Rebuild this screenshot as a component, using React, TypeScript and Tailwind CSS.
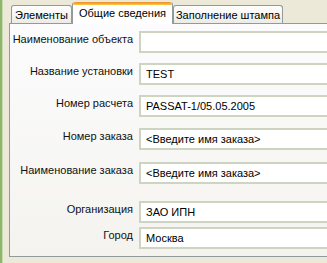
const rows = [
  { label: "Наименование объекта", value: "", mt: "mt-[6px]" },
  { label: "Название установки", value: "TEST", mt: "mt-[10px]" },
  { label: "Номер расчета", value: "PASSAT-1/05.05.2005", mt: "mt-[10px]" },
  { label: "Номер заказа", value: "<Введите имя заказа>", mt: "mt-[11px]" },
  { label: "Наименование заказа", value: "<Введите имя заказа>", mt: "mt-[12px]" },
  { label: "Организация", value: "ЗАО ИПН", mt: "mt-[17px]" },
  { label: "Город", value: "Москва", mt: "mt-[4px]" },
];

const font = "font-['Liberation_Sans',Arial,sans-serif]";

function Tab({ label, active }: { label: string; active?: boolean }) {
  if (active) {
    return (
      <div className="relative z-10 -mb-px flex h-[22px] w-[101px] flex-col rounded-t-[3px] border-x border-[#919b9c] bg-white">
        <div className="h-[3px] rounded-t-[3px] bg-gradient-to-b from-[#e68b2c] to-[#ffc83c]" />
        <div className="flex flex-1 items-start justify-center whitespace-nowrap pt-[1px] text-[11px] leading-[14px] text-black">
          {label}
        </div>
      </div>
    );
  }
  return (
    <div className="flex h-[18px] items-start justify-center whitespace-nowrap rounded-t-[3px] border-x border-t border-[#919b9c] bg-gradient-to-b from-white to-[#ecebe5] pt-[2px] text-[11px] leading-[14px] text-black">
      {label}
    </div>
  );
}

export default function App() {
  return (
    <div className={`flex h-[263px] w-[327px] overflow-hidden bg-[#ece9d8] ${font}`}>
      <div className="flex w-[3px] shrink-0">
        <div className="w-[2px] bg-[#8fb46c]" />
        <div className="w-px bg-[#c6dab0]" />
      </div>
      <div className="flex flex-col pl-[6px] pt-[2px]">
        <div className="flex items-end pl-[2px]">
          <div className="w-[61px]">
            <Tab label="Элементы" />
          </div>
          <Tab label="Общие сведения" active />
          <div className="w-[110px]">
            <Tab label="Заполнение штампа" />
          </div>
        </div>
        <div className="h-[234px] w-[340px] border border-[#919b9c] bg-gradient-to-b from-[#fcfcfe] to-[#f4f3ee] pt-px">
          {rows.map((r) => (
            <div key={r.label} className={`flex items-start ${r.mt}`}>
              <div className="w-[129px] shrink-0 whitespace-nowrap pr-[6px] pt-px text-right text-[11px] leading-[14px] text-[#111]">
                {r.label}
              </div>
              <div className="flex h-[22px] flex-1 items-center whitespace-nowrap border-2 border-[#cdd4c1] bg-white pl-[5px] text-[11px] text-black">
                {r.value}
              </div>
            </div>
          ))}
        </div>
      </div>
    </div>
  );
}
